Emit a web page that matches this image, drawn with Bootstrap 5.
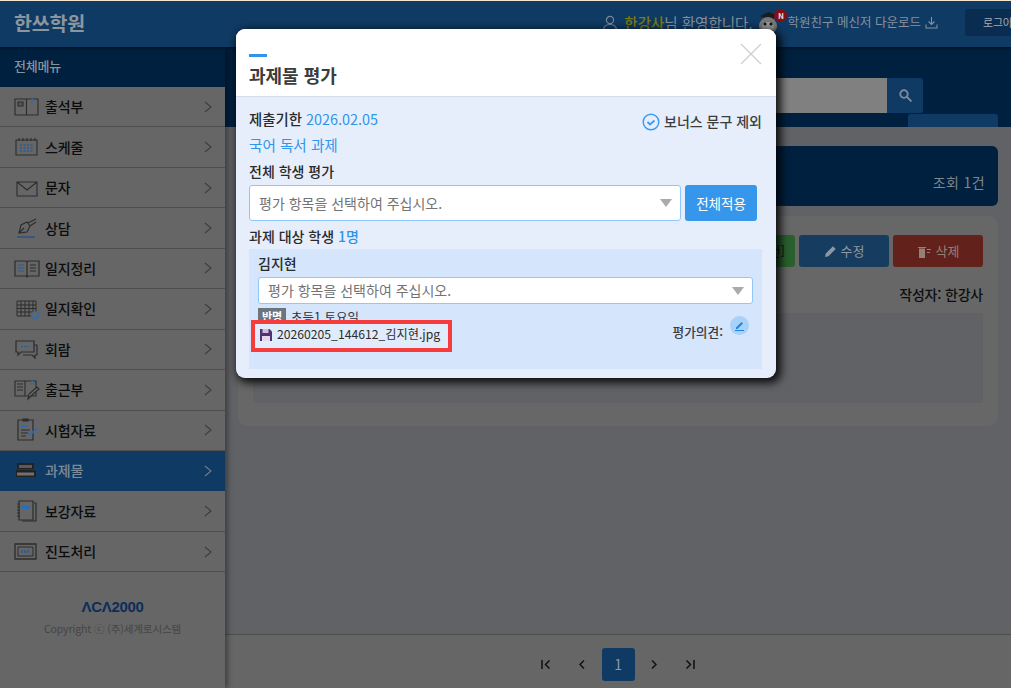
<!DOCTYPE html>
<html lang="ko">
<head>
<meta charset="utf-8">
<title>과제물 평가</title>
<link rel="stylesheet" href="https://cdn.jsdelivr.net/npm/bootstrap@5.3.0/dist/css/bootstrap.min.css">
<style>
html,body{height:100%;overflow:hidden}
body{font-family:"Noto Sans CJK KR","Noto Sans",sans-serif;font-size:14px;background:#606266;color:#111;letter-spacing:-.2px}
.shell{height:688px;border-top:1px solid #f3e4cf;overflow:hidden}
.topbar{height:46px;padding-bottom:3px;background:#0f3a63;color:#87919b;box-shadow:0 1px 2px rgba(0,0,0,.5);position:relative;z-index:3}
.brand{font-size:19.5px;font-weight:700;margin-left:14px;color:#8d969e}
.hello{font-size:14.5px;margin-left:6px;letter-spacing:0}
.hello b{font-weight:500;color:#7c7a12}
.mascot{margin:0 6px 0 5px;position:relative;width:24px;height:26px;top:1px}
.nbadge{position:absolute;right:-6px;top:-2px;width:13px;height:13px;border-radius:50%;background:#8c0d10;color:#ddd;font-size:8px;font-weight:700;line-height:13px;text-align:center}
.msgr{font-size:12.5px;letter-spacing:0}
.logout{margin-left:27px;margin-right:-24px;width:70px;height:27px;background:#0a2c50;border-radius:3px 0 0 3px;color:#a6acb2;font-size:11px;line-height:27px;padding-left:18px;white-space:nowrap;overflow:hidden}
.bodywrap{height:641px}
.sidebar{width:225px;background:#666;box-shadow:3px 0 5px rgba(0,0,0,.35);position:relative;z-index:2}
.sidehead{height:40px;background:#00203f;color:#89939c;font-size:13px;line-height:38px;padding-left:14px;font-weight:500}
.menu-row{height:40.45px;flex:none;border-bottom:1px solid #4e4e4e;padding:0 13px 0 14px;color:#0c0c0c;font-weight:500;background:#666;letter-spacing:-.1px}
.menu-row.active{background:#0f3a63;color:#7d8a97;border-bottom-color:#0f3a63}
.menu-row svg.mi{width:26px;height:24px;margin-right:5px;flex:none}
.sidefoot{padding-top:26px;text-align:center}
.acalogo{font-family:"Liberation Sans",sans-serif;font-weight:700;font-size:15px;color:#0e2d5a;line-height:18px;letter-spacing:-.3px}
.copy{font-size:10.5px;color:#454545;margin-top:5px;letter-spacing:-.1px}
.band{height:80px;background:#00203f;padding-top:31px}
.searchrow{height:35px;margin-right:88px}
.searchinput{width:500px;background:#808080}
.searchbtn{width:36px;background:#0f3a63;border-radius:0 3px 3px 0}
.tabpiece{width:90px;height:13px;margin:1px 13px 0 auto;background:#0f3a63;border-radius:3px 3px 0 0}
.mainarea{min-width:0}
.stage{padding:19px 13px 0;flex:1 1 auto}
.infopanel{height:60px;background:#00203f;border-radius:0 6px 6px 6px;color:#7f868d;font-size:14px;padding:26px 13px 0 0;text-align:right;letter-spacing:.4px}
.sheet{height:210px;margin-top:10px;background:#676767;border-radius:9px;padding:19px 15px 0}
.tool{width:90px;height:32px;border-radius:3px;border:0;padding:0;font-size:13px;color:#8c98a5;margin-left:4px}
.tool-g{background:#2a602d;color:#111;text-align:right;padding-right:10px}
.tool-b{background:#163c5f}
.tool-r{background:#62211b;color:#938079}
.author{font-weight:500;color:#0e0e0e;margin:17px 0 9px;line-height:20px;font-size:14px}
.greybox{height:90px;background:#606266}
.pagerbar{height:54px;background:#666;border-top:1px solid #4c4c4c;padding-top:13px}
.pg{width:33px;height:33px;color:#111;font-size:14px;margin:0 1.5px}
.pg.on{background:#0f3a63;color:#8a98a6;border-radius:3px}
.evalmodal{position:absolute;left:236px;top:29px;width:540px;height:349px;z-index:1060;margin:0;border:0;border-radius:9px;overflow:hidden;background:#e6eefc;box-shadow:none}
.evalshadow{position:absolute;left:236px;top:29px;width:540px;height:349px;z-index:1055;border-radius:9px;box-shadow:3px 3px 9px 2px rgba(0,0,0,.85)}
.ehead{height:68px;background:#fff;border-bottom:1px solid #d6dde8;padding:25px 13px 0;border-radius:0;position:relative;display:block}
.ebar{width:18px;height:3px;background:#2f95ea;display:block}
.etitle{font-size:18px;font-weight:700;color:#3c3c3c;line-height:26px;margin:5px 0 0;letter-spacing:0}
.xclose{position:absolute;right:14px;top:14px;width:22px;height:22px}
.ebody{padding:11px 14px 0 13px;color:#2a2a2a;letter-spacing:0}
.blue{color:#2f95ea}
.line1{height:22px;line-height:22px;font-size:14.4px}
.bonus{font-size:14px;font-weight:500;color:#3d3d3d;margin:3px 0 0 0}
.assign{margin-top:2px;line-height:22px;font-size:14.6px}
.label2{font-weight:500;line-height:20px;margin-top:5px}
.tselect{border:1px solid #8fc6fb;border-radius:3px;font-size:14px;color:#737373;box-shadow:none;background-color:#fff;background-image:url("data:image/svg+xml,%3Csvg xmlns='http://www.w3.org/2000/svg' width='12' height='8'%3E%3Cpath d='M0 0h12L6 8z' fill='%23aaa'/%3E%3C/svg%3E");background-size:12px 8px;background-position:right 8px center}
.tselect.big{height:36px;width:432px;padding:0 30px 0 9px;margin-top:4px}
.tselect.mid{height:27px;padding:0 30px 0 9px;line-height:25px}
.applybtn{width:72px;height:36px;margin:4px 5px 0 4px;padding:0;background:#3596eb;border:0;border-radius:3px;color:#fff;font-size:13.5px;font-weight:400}
.label3{font-weight:500;line-height:20px;margin-top:5px}
.stubox{background:#d4e5fc;margin-top:3px;height:120px;padding:4px 9px 0}
.stuname{font-weight:500;line-height:20px;margin-bottom:4px}
.cls{font-size:12.5px;line-height:17px;margin-top:4px;color:#333}
.cbadge{background:#6c757d;color:#fff;font-size:11px;font-weight:700;width:28px;height:17px;line-height:17px;text-align:center;margin-right:5px;padding:0;border-radius:0}
.fileflag{margin:-5px 0 0 -7px;width:201px;height:32px;border:4px solid #f53b3b;background:#e0ebfb;padding:0 0 3px 5px;font-size:12.2px;color:#2c2c2c;position:relative}
.fileflag svg{margin-right:5px}
.opin{font-size:12.7px;font-weight:500;color:#3b3b3b;margin:18px 4px 0 0}
.pencil{width:19px;height:19px;border-radius:50%;background:#a8d2fa;margin:-6px 0 0 7px}
</style>
</head>
<body>
<div class="shell d-flex flex-column">
  <header class="topbar d-flex align-items-center">
    <div class="brand">한쓰학원</div>
    <div class="ms-auto d-flex align-items-center">
      <svg width="16" height="16" viewBox="0 0 16 16" fill="none" stroke="#7c8791" stroke-width="1.2"><circle cx="8" cy="5" r="3.6"/><path d="M1.5 15.5c0-4 2.8-6 6.5-6s6.500 2 6.500 6"/></svg>
      <span class="hello"><b>한강사</b>님 환영합니다.</span>
      <div class="mascot">
        <svg width="24" height="26" viewBox="0 0 24 26"><path d="M3 5l9-4 9 4-9 4z" fill="#1c1c1c"/><ellipse cx="11" cy="15" rx="9" ry="9" fill="#777"/><ellipse cx="11" cy="16" rx="6" ry="5" fill="#999"/><circle cx="8" cy="13" r="1.500" fill="#111"/><circle cx="14" cy="13" r="1.500" fill="#111"/></svg>
        <span class="nbadge">N</span>
      </div>
      <span class="msgr">학원친구 메신저 다운로드</span>
      <svg class="ms-1" width="13" height="13" viewBox="0 0 13 13" fill="none" stroke="#87919b" stroke-width="1.100"><path d="M6.500 1v7M3.500 5.500l3 3 3-3M1 8.500V12h11V8.500"/></svg>
      <div class="logout">로그아웃</div>
    </div>
  </header>
  <div class="bodywrap d-flex">
    <aside class="sidebar d-flex flex-column flex-shrink-0">
      <div class="sidehead">전체메뉴</div>
      <a class="menu-row d-flex align-items-center text-decoration-none">
        <svg class="mi" viewBox="0 0 26 24" fill="none" stroke="#2c2c2c" stroke-width="1.100"><path d="M1 4h23v16H1zM12.500 4v16"/><path d="M4 7h5v4H4z" fill="#555"/><path d="M17 4h3v4l-1.500-1-1.500 1z" fill="#2a6cb5" stroke="none"/></svg>
        <span>출석부</span><svg class="ms-auto" width="8" height="12" viewBox="0 0 8 12" fill="none" stroke="#3d3d3d" stroke-width="1.100"><path d="M1 1l6 5-6 5"/></svg></a>
      <a class="menu-row d-flex align-items-center text-decoration-none">
        <svg class="mi" viewBox="0 0 26 24" fill="none" stroke="#2c2c2c" stroke-width="1.100"><path d="M2 5h21v15H2z"/><path d="M5 3v3M9 3v3M13 3v3M17 3v3M21 3v3"/><path d="M6 10h14M6 13h14M6 16h14" stroke="#2a5c94" stroke-width="1.300" stroke-dasharray="2 1.500"/></svg>
        <span>스케줄</span><svg class="ms-auto" width="8" height="12" viewBox="0 0 8 12" fill="none" stroke="#3d3d3d" stroke-width="1.100"><path d="M1 1l6 5-6 5"/></svg></a>
      <a class="menu-row d-flex align-items-center text-decoration-none">
        <svg class="mi" viewBox="0 0 26 24" fill="none" stroke="#2c2c2c" stroke-width="1.100"><path d="M3 6h20v14H3zM3 6l10 8 10-8"/></svg>
        <span>문자</span><svg class="ms-auto" width="8" height="12" viewBox="0 0 8 12" fill="none" stroke="#3d3d3d" stroke-width="1.100"><path d="M1 1l6 5-6 5"/></svg></a>
      <a class="menu-row d-flex align-items-center text-decoration-none">
        <svg class="mi" viewBox="0 0 26 24" fill="none" stroke="#2c2c2c" stroke-width="1.100"><path d="M5 17l2-8 6-3 3 4-3 6zM5 17l5-5M14 7l8-4M16 10l6-4"/><path d="M3 21h18" stroke="#1f4f86" stroke-width="1.300"/></svg>
        <span>상담</span><svg class="ms-auto" width="8" height="12" viewBox="0 0 8 12" fill="none" stroke="#3d3d3d" stroke-width="1.100"><path d="M1 1l6 5-6 5"/></svg></a>
      <a class="menu-row d-flex align-items-center text-decoration-none">
        <svg class="mi" viewBox="0 0 26 24" fill="none" stroke="#2c2c2c" stroke-width="1.200"><path d="M1 5h11l1 1 1-1h11v15H14l-1 1-1-1H1zM13 6v14"/><path d="M4 9h6M4 12h6M4 15h6" stroke="#2a5c94"/><path d="M16 9h6M16 12h6M16 15h6"/></svg>
        <span>일지정리</span><svg class="ms-auto" width="8" height="12" viewBox="0 0 8 12" fill="none" stroke="#3d3d3d" stroke-width="1.100"><path d="M1 1l6 5-6 5"/></svg></a>
      <a class="menu-row d-flex align-items-center text-decoration-none">
        <svg class="mi" viewBox="0 0 26 24" fill="none" stroke="#2c2c2c" stroke-width="1"><path d="M3 4h19v15H3zM3 8h19M3 11.500h19M3 15h19M7 4v15M11 4v15M15 4v15M19 4v15"/><circle cx="21" cy="18" r="3.500" fill="#666" stroke="#2a6cb5" stroke-width="1.200"/></svg>
        <span>일지확인</span><svg class="ms-auto" width="8" height="12" viewBox="0 0 8 12" fill="none" stroke="#3d3d3d" stroke-width="1.100"><path d="M1 1l6 5-6 5"/></svg></a>
      <a class="menu-row d-flex align-items-center text-decoration-none">
        <svg class="mi" viewBox="0 0 26 24" fill="none" stroke="#2c2c2c" stroke-width="1.200"><path d="M2 4h18v11H7l-3 3v-3H2z"/><path d="M20 8h3v10h-2v3l-3-3H9"/><path d="M7 9.500h8" stroke="#2a5c94" stroke-dasharray="2 1"/></svg>
        <span>회람</span><svg class="ms-auto" width="8" height="12" viewBox="0 0 8 12" fill="none" stroke="#3d3d3d" stroke-width="1.100"><path d="M1 1l6 5-6 5"/></svg></a>
      <a class="menu-row d-flex align-items-center text-decoration-none">
        <svg class="mi" viewBox="0 0 26 24" fill="none" stroke="#2c2c2c" stroke-width="1.100"><path d="M1 3h21v15H1zM11 3v15M3 6h6M3 9h6M3 12h6"/><path d="M17 3h3v4l-1.500-1-1.500 1z" fill="#2a6cb5" stroke="none"/><path d="M14 21l1-5 8-7 2 2-8 7z" fill="#666"/></svg>
        <span>출근부</span><svg class="ms-auto" width="8" height="12" viewBox="0 0 8 12" fill="none" stroke="#3d3d3d" stroke-width="1.100"><path d="M1 1l6 5-6 5"/></svg></a>
      <a class="menu-row d-flex align-items-center text-decoration-none">
        <svg class="mi" viewBox="0 0 26 24" fill="none" stroke="#2c2c2c" stroke-width="1.200"><path d="M4 2h15v20H4zM9 1h5v2H9z"/><path d="M7 8h6" stroke="#2a6cb5" stroke-width="2"/><path d="M7 12h9M7 15h7M7 18h5"/><path d="M15 17l8-6" stroke="#2a6cb5" stroke-width="2"/></svg>
        <span>시험자료</span><svg class="ms-auto" width="8" height="12" viewBox="0 0 8 12" fill="none" stroke="#3d3d3d" stroke-width="1.100"><path d="M1 1l6 5-6 5"/></svg></a>
      <a class="menu-row active d-flex align-items-center text-decoration-none">
        <svg class="mi" viewBox="0 0 26 24"><path d="M3 4h17v2H3zM3 6h17v4H3z" fill="#222"/><path d="M5 6h13v3H5z" fill="#5a5a5a"/><path d="M2 11h20v2H2zM2 13h20v5H2z" fill="#222"/><path d="M3 13.500h17v3H3z" fill="#707070"/></svg>
        <span>과제물</span><svg class="ms-auto" width="8" height="12" viewBox="0 0 8 12" fill="none" stroke="#6f7e8e" stroke-width="1.100"><path d="M1 1l6 5-6 5"/></svg></a>
      <a class="menu-row d-flex align-items-center text-decoration-none">
        <svg class="mi" viewBox="0 0 26 24" fill="none" stroke="#2c2c2c" stroke-width="1.200"><path d="M5 2h14v19H5zM8 2v-.500M3 5h3M3 8h3M3 11h3M3 14h3M3 17h3"/><path d="M20 4h2v18H8" /><path d="M8 7h8v3H8z" fill="#2a6cb5" stroke="none"/></svg>
        <span>보강자료</span><svg class="ms-auto" width="8" height="12" viewBox="0 0 8 12" fill="none" stroke="#3d3d3d" stroke-width="1.100"><path d="M1 1l6 5-6 5"/></svg></a>
      <a class="menu-row d-flex align-items-center text-decoration-none">
        <svg class="mi" viewBox="0 0 26 24" fill="none" stroke="#2c2c2c" stroke-width="1.300"><path d="M1 4h21v15H1z"/><path d="M4 7h15v9H4z" stroke-width="1"/><path d="M7 11.500h9" stroke="#2a5c94" stroke-width="2.500" stroke-dasharray="2 1"/></svg>
        <span>진도처리</span><svg class="ms-auto" width="8" height="12" viewBox="0 0 8 12" fill="none" stroke="#3d3d3d" stroke-width="1.100"><path d="M1 1l6 5-6 5"/></svg></a>
      <div class="sidefoot">
        <div class="acalogo">ΛCΛ2000</div>
        <div class="copy">Copyright ⓒ (주)세계로시스템</div>
      </div>
    </aside>
    <main class="mainarea d-flex flex-column flex-grow-1">
      <div class="band">
        <div class="searchrow d-flex justify-content-end">
          <div class="searchinput"></div>
          <div class="searchbtn d-flex align-items-center justify-content-center">
            <svg width="13" height="13" viewBox="0 0 13 13" fill="none" stroke="#7e8c9a" stroke-width="1.800"><circle cx="5" cy="5" r="3.800"/><path d="M8 8l4.500 4.500"/></svg>
          </div>
        </div>
        <div class="tabpiece"></div>
      </div>
      <div class="stage">
        <div class="infopanel">조회 1건</div>
        <div class="sheet">
          <div class="d-flex justify-content-end">
            <button class="tool tool-g">수정전]</button>
            <button class="tool tool-b d-flex align-items-center justify-content-center gap-1"><svg width="13" height="13" viewBox="0 0 13 13" fill="#8c98a5"><path d="M1 12l.800-3.500L9 1.300l2.700 2.700L4.500 11.200z"/></svg>수정</button>
            <button class="tool tool-r d-flex align-items-center justify-content-center gap-1"><svg width="15" height="13" viewBox="0 0 15 13" fill="#938079"><path d="M1 2h8v1H1zM2 3.500h6V13H2zM10 4h4v1h-4zM10 7h3v1h-3z"/></svg>삭제</button>
          </div>
          <div class="author text-end">작성자: 한강사</div>
          <div class="greybox"></div>
        </div>
      </div>
      <nav class="pagerbar d-flex justify-content-center">
        <span class="pg d-flex align-items-center justify-content-center"><svg width="10" height="9" viewBox="0 0 10 9" fill="none" stroke="#111" stroke-width="1.500"><path d="M1 0v9M8.500 .5l-4 4 4 4"/></svg></span>
        <span class="pg d-flex align-items-center justify-content-center"><svg width="6" height="9" viewBox="0 0 6 9" fill="none" stroke="#111" stroke-width="1.500"><path d="M5 .5l-4 4 4 4"/></svg></span>
        <span class="pg on d-flex align-items-center justify-content-center">1</span>
        <span class="pg d-flex align-items-center justify-content-center"><svg width="6" height="9" viewBox="0 0 6 9" fill="none" stroke="#111" stroke-width="1.500"><path d="M1 .5l4 4-4 4"/></svg></span>
        <span class="pg d-flex align-items-center justify-content-center"><svg width="10" height="9" viewBox="0 0 10 9" fill="none" stroke="#111" stroke-width="1.500"><path d="M9 0v9M1.500 .5l4 4-4 4"/></svg></span>
      </nav>
    </main>
  </div>
</div>

<div class="evalshadow"></div>
<div class="modal-content evalmodal" role="dialog">
  <div class="ehead">
    <span class="ebar"></span>
    <h5 class="etitle">과제물 평가</h5>
    <svg class="xclose" viewBox="0 0 22 22" stroke="#cfcfcf" stroke-width="1.300"><path d="M1 1l20 20M21 1L1 21"/></svg>
  </div>
  <div class="ebody">
    <div class="d-flex justify-content-between">
      <div class="line1"><span class="fw-medium">제출기한</span> <span class="blue">2026.02.05</span></div>
      <div class="bonus d-flex align-items-center gap-1">
        <svg width="18" height="18" viewBox="0 0 18 18" fill="none" stroke="#3a9cf2" stroke-width="1.500"><circle cx="9" cy="9" r="7.800"/><path d="M5.500 9l2.500 2.500 4.500-4" stroke-width="1.800"/></svg>
        <span>보너스 문구 제외</span>
      </div>
    </div>
    <div class="assign blue">국어 독서 과제</div>
    <div class="label2">전체 학생 평가</div>
    <div class="d-flex">
      <select class="form-select tselect big flex-shrink-0"><option>평가 항목을 선택하여 주십시오.</option></select>
      <button class="btn applybtn flex-shrink-0">전체적용</button>
    </div>
    <div class="label3">과제 대상 학생 <span class="blue">1명</span></div>
    <div class="stubox">
      <div class="stuname">김지현</div>
      <select class="form-select tselect mid"><option>평가 항목을 선택하여 주십시오.</option></select>
      <div class="d-flex justify-content-between">
        <div>
          <div class="cls d-flex align-items-center"><span class="badge cbadge">반명</span>초등1 토요일</div>
          <div class="fileflag d-flex align-items-center">
            <svg class="flex-shrink-0" width="12" height="12" viewBox="0 0 12 12"><path d="M0 0h9.500L12 2.500V12H0z" fill="#54326f"/><path d="M2.500 0h6v4h-6z" fill="#cdbfe0"/><path d="M2 7h8v5H2z" fill="#e4d8ef"/></svg>
            <span>20260205_144612_김지현.jpg</span>
          </div>
        </div>
        <div class="opin d-flex align-items-start">
          <span>평가의견:</span>
          <span class="pencil d-flex align-items-center justify-content-center">
            <svg width="11" height="11" viewBox="0 0 11 11" fill="#1f86e8"><path d="M2 7.500L7.500 2 9 3.500 3.500 9H2zM1 10h9v1H1z"/></svg>
          </span>
        </div>
      </div>
    </div>
  </div>
</div>
<script src="https://cdn.jsdelivr.net/npm/bootstrap@5.3.0/dist/js/bootstrap.bundle.min.js"></script>
</body>
</html>
